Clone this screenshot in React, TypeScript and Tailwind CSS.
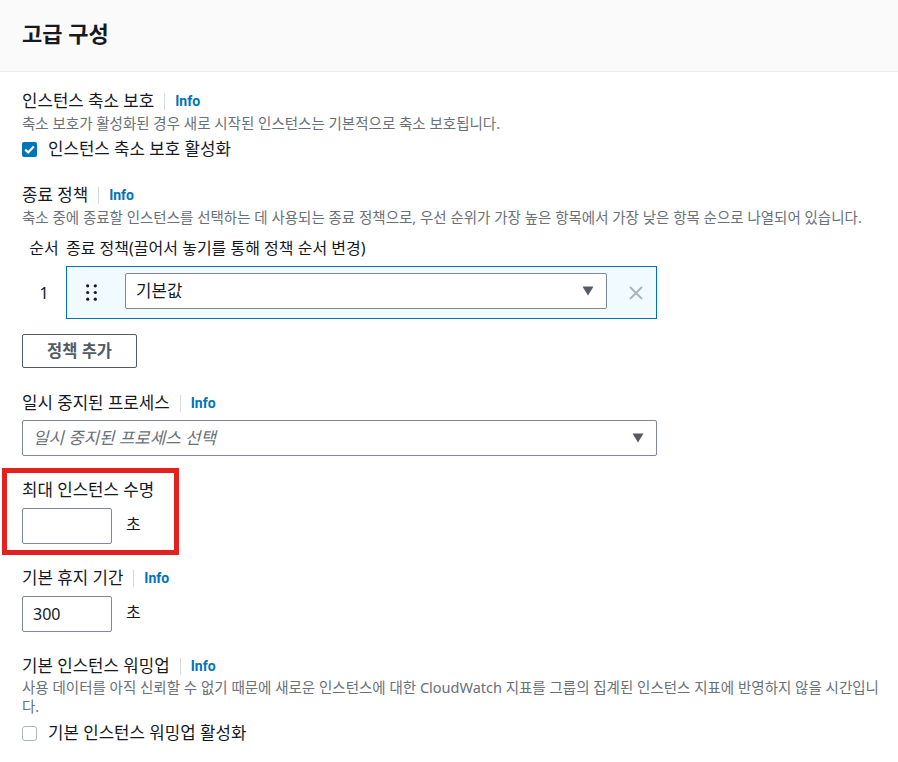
const font = { fontFamily: '"Noto Sans", "Noto Sans CJK KR", sans-serif' };

function Label({ text, info = true }: { text: string; info?: boolean }) {
  return (
    <div className="flex items-center h-[20px] text-[16.8px] leading-[20px] text-[#16191f]">
      <span>{text}</span>
      {info && (
        <>
          <span className="mx-[10px] w-px h-[17px] bg-[#d5dbdb]" />
          <span className="text-[14px] font-bold text-[#0073bb]" style={{ fontFamily: 'Roboto, sans-serif' }}>
            Info
          </span>
        </>
      )}
    </div>
  );
}

function Desc({ children, className = '' }: { children: React.ReactNode; className?: string }) {
  return <div className={`text-[14.5px] leading-[19px] text-[#687078] ${className}`}>{children}</div>;
}

function Caret() {
  return (
    <svg width="12" height="10" viewBox="0 0 12 10">
      <path d="M0.5 0.5 H11.5 L6 9.5 Z" fill="#545b64" />
    </svg>
  );
}

function CheckBox({ checked, label }: { checked: boolean; label: string }) {
  return (
    <div className="flex items-center h-[20px] text-[16.8px] leading-[20px] text-[#16191f]">
      {checked ? (
        <span className="w-[15px] h-[15px] rounded-[2px] bg-[#0073bb] flex items-center justify-center">
          <svg width="11" height="9" viewBox="0 0 11 9">
            <path d="M1.2 4.6 L4.2 7.4 L9.8 1.4" fill="none" stroke="white" strokeWidth="2.2" />
          </svg>
        </span>
      ) : (
        <span className="w-[15px] h-[15px] rounded-[3px] border-[1.5px] border-[#aab7b8] bg-white" />
      )}
      <span className="ml-[11px]">{label}</span>
    </div>
  );
}

function SecondsInput({ value }: { value?: string }) {
  return (
    <div className="flex items-center mt-[8px]">
      <div className="w-[90px] h-[36px] border border-[#7d8998] rounded-[2px] pl-[10px] flex items-center text-[16px] text-[#16191f]">
        {value}
      </div>
      <span className="ml-[14px] text-[16px] text-[#16191f] -mt-[5px]">초</span>
    </div>
  );
}

export default function App() {
  return (
    <div className="min-h-screen bg-white" style={font}>
      {/* Header */}
      <div className="h-[72px] bg-[#fafafa] border-b border-[#eaeded] px-[22px] flex items-center">
        <h2 className="text-[22px] font-bold text-[#16191f] leading-[28px] -mt-[6px]">고급 구성</h2>
      </div>

      <div className="px-[22px] pt-[19px] pb-[20px]">
        {/* 인스턴스 축소 보호 */}
        <Label text="인스턴스 축소 보호" />
        <Desc className="mt-[3px]">축소 보호가 활성화된 경우 새로 시작된 인스턴스는 기본적으로 축소 보호됩니다.</Desc>
        <div className="mt-[6px]">
          <CheckBox checked label="인스턴스 축소 보호 활성화" />
        </div>

        {/* 종료 정책 */}
        <div className="mt-[26px]">
          <Label text="종료 정책" />
        </div>
        <Desc className="mt-[3px]">
          축소 중에 종료할 인스턴스를 선택하는 데 사용되는 종료 정책으로, 우선 순위가 가장 높은 항목에서 가장 낮은 항목 순으로 나열되어 있습니다.
        </Desc>
        <div className="w-[635px] mt-[11px]">
          <div className="flex h-[20px] text-[16px] leading-[20px] text-[#16191f]">
            <span className="w-[44px] text-center">순서</span>
            <span>종료 정책(끌어서 놓기를 통해 정책 순서 변경)</span>
          </div>
          <div className="flex items-center mt-[8px]">
            <span className="w-[44px] text-center text-[16px] text-[#16191f]">1</span>
            <div className="flex-1 h-[53px] border border-[#0073bb] bg-[#f1faff] flex items-center pl-[19px] pr-[13px]">
              <svg width="11" height="17" viewBox="0 0 11 17">
                {[1.7, 9.3].map((cx) =>
                  [1.8, 8.5, 15.2].map((cy) => <circle key={`${cx}-${cy}`} cx={cx} cy={cy} r="1.6" fill="#16191f" />)
                )}
              </svg>
              <div className="ml-[28px] flex-1 h-[36px] mb-[4px] border border-[#7d8998] rounded-[2px] bg-white flex items-center justify-between pl-[10px] pr-[12px] text-[16.8px] text-[#16191f]">
                <span>기본값</span>
                <Caret />
              </div>
              <svg className="ml-[22px]" width="14" height="14" viewBox="0 0 14 14">
                <path d="M1 1 L13 13 M13 1 L1 13" stroke="#aab7b8" strokeWidth="2" />
              </svg>
            </div>
          </div>
          <button className="mt-[15px] w-[115px] h-[34px] border border-[#545b64] rounded-[2px] bg-white text-[16.5px] font-bold text-[#545b64]">
            정책 추가
          </button>
        </div>

        {/* 일시 중지된 프로세스 */}
        <div className="mt-[25px]">
          <Label text="일시 중지된 프로세스" />
        </div>
        <div className="w-[635px] mt-[7px] h-[36px] border border-[#7d8998] rounded-[2px] flex items-center justify-between pl-[10px] pr-[12px]">
          <span className="italic text-[16.8px] text-[#687078]">일시 중지된 프로세스 선택</span>
          <Caret />
        </div>

        {/* 최대 인스턴스 수명 */}
        <div className="relative mt-[24px]">
          <Label text="최대 인스턴스 수명" info={false} />
          <SecondsInput />
          <div className="absolute left-[-20px] top-[-12px] w-[177px] h-[87px] border-[5px] border-[#e3211f] pointer-events-none" />
        </div>

        {/* 기본 휴지 기간 */}
        <div className="mt-[24px]">
          <Label text="기본 휴지 기간" />
        </div>
        <SecondsInput value="300" />

        {/* 기본 인스턴스 워밍업 */}
        <div className="mt-[24px]">
          <Label text="기본 인스턴스 워밍업" />
        </div>
        <Desc className="mt-[2px]">
          <span className="whitespace-nowrap">
            사용 데이터를 아직 신뢰할 수 없기 때문에 새로운 인스턴스에 대한 CloudWatch 지표를 그룹의 집계된 인스턴스 지표에 반영하지 않을 시간입니
          </span>
          <br />
          다.
        </Desc>
        <div className="mt-[7px]">
          <CheckBox checked={false} label="기본 인스턴스 워밍업 활성화" />
        </div>
      </div>
    </div>
  );
}
